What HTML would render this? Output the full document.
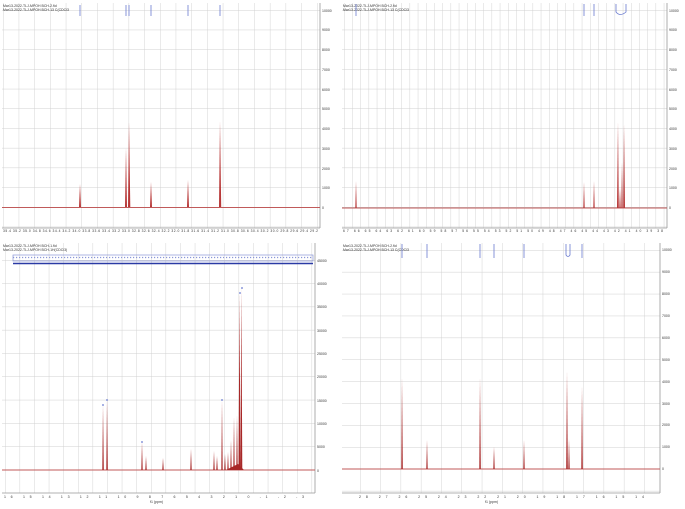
<!DOCTYPE html>
<html><head><meta charset="utf-8"><style>
html,body{margin:0;padding:0;background:#fff;}
svg{display:block;font-family:"Liberation Sans",sans-serif;}
</style></head><body>
<svg width="685" height="509" viewBox="0 0 685 509" xmlns="http://www.w3.org/2000/svg">
<defs>
<pattern id="gTL" x="3" y="10" width="15.7" height="19.7" patternUnits="userSpaceOnUse"><path d="M0 0V19.7M0 0H15.7" stroke="#d0d0d0" stroke-width="0.9" fill="none"/></pattern>
<pattern id="gTR" x="344" y="10" width="8.2" height="19.7" patternUnits="userSpaceOnUse"><path d="M0 0V19.7M0 0H8.2" stroke="#d0d0d0" stroke-width="0.9" fill="none"/></pattern>
<pattern id="gBL" x="5" y="260" width="14.6" height="23.3" patternUnits="userSpaceOnUse"><path d="M0 0V23.3M0 0H14.6" stroke="#d0d0d0" stroke-width="0.9" fill="none"/></pattern>
<pattern id="gBR" x="360" y="250" width="20.3" height="21.9" patternUnits="userSpaceOnUse"><path d="M0 0V21.9M0 0H20.3" stroke="#d0d0d0" stroke-width="0.9" fill="none"/></pattern>
</defs>
<rect width="685" height="509" fill="#fff"/>

<!-- TL -->
<rect x="2" y="3" width="318" height="225" fill="url(#gTL)"/>
<line x1="320" y1="3" x2="320" y2="228" stroke="#999" stroke-width="0.8"/>
<line x1="2" y1="228" x2="320" y2="228" stroke="#999" stroke-width="0.8"/>
<text x="3" y="7" font-size="3.5" fill="#333">Mar13-2022-TLJ-MPOH BCH-2.fid</text>
<text x="3" y="11" font-size="3.5" fill="#333">Mar13-2022-TLJ-MPOH BCH-13 C(CDCl3</text>
<g stroke="#6a7bd0" stroke-width="0.8"><line x1="80" y1="5" x2="80" y2="16"/><line x1="126" y1="5" x2="126" y2="16"/><line x1="129" y1="5" x2="129" y2="16"/><line x1="151" y1="5" x2="151" y2="16"/><line x1="188" y1="5" x2="188" y2="16"/><line x1="220" y1="5" x2="220" y2="16"/></g>
<g font-size="3.5" fill="#333"><text x="322" y="12">10000</text><text x="322" y="31">9000</text><text x="322" y="51">8000</text><text x="322" y="71">7000</text><text x="322" y="91">6000</text><text x="322" y="110">5000</text><text x="322" y="130">4000</text><text x="322" y="150">3000</text><text x="322" y="170">2000</text><text x="322" y="189">1000</text><text x="322" y="209">0</text></g>
<text x="3" y="232" font-size="3.3" fill="#333" textLength="315">35.4 35.2 35.0 34.8 34.6 34.4 34.2 34.0 33.8 33.6 33.4 33.2 33.0 32.8 32.6 32.4 32.2 32.0 31.8 31.6 31.4 31.2 31.0 30.8 30.6 30.4 30.2 30.0 29.8 29.6 29.4 29.2</text>
<path d="M2 207.5H320" stroke="#c05a5a" stroke-width="1"/>
<g fill="#b83838"><path d="M79 207L80 184L81 207Z"/><path d="M125 207L126 148L127 207Z"/><path d="M128 207L129 122L130.3 207Z"/><path d="M150 207L151 182L152 207Z"/><path d="M187 207L188 180L189 207Z"/><path d="M219 207L220 121L221.2 207Z"/></g>

<!-- TR -->
<rect x="342" y="3" width="325" height="225" fill="url(#gTR)"/>
<line x1="667" y1="3" x2="667" y2="228" stroke="#999" stroke-width="0.8"/>
<line x1="342" y1="228" x2="667" y2="228" stroke="#999" stroke-width="0.8"/>
<text x="343" y="7" font-size="3.5" fill="#333">Mar13-2022-TLJ-MPOH BCH-2.fid</text>
<text x="343" y="11" font-size="3.5" fill="#333">Mar13-2022-TLJ-MPOH BCH-13 C(CDCl3</text>
<g stroke="#6a7bd0" stroke-width="0.8"><line x1="356" y1="4" x2="356" y2="16"/><line x1="584" y1="4" x2="584" y2="16"/><line x1="594" y1="4" x2="594" y2="16"/><path d="M616 4V12Q620 17 626 12V4" fill="none"/></g>
<g font-size="3.5" fill="#333"><text x="669" y="12">10000</text><text x="669" y="31">9000</text><text x="669" y="51">8000</text><text x="669" y="71">7000</text><text x="669" y="91">6000</text><text x="669" y="110">5000</text><text x="669" y="130">4000</text><text x="669" y="150">3000</text><text x="669" y="170">2000</text><text x="669" y="189">1000</text><text x="669" y="209">0</text></g>
<text x="343" y="232" font-size="3.3" fill="#333" textLength="320">67 66 65 64 63 62 61 60 59 58 57 56 55 54 53 52 51 50 49 48 47 46 45 44 43 42 41 40 39 38</text>
<path d="M342 208H667" stroke="#c05a5a" stroke-width="1"/>
<g fill="#b83838"><path d="M355.3 208L356 181L356.7 208Z"/><path d="M583.3 208L584 182L584.7 208Z"/><path d="M593.3 208L594 181L594.7 208Z"/><path d="M617 208L618 122L618.8 208Z"/><path d="M619.3 208L620 188L620.7 208Z"/><path d="M621.3 208L622 162L622.7 208Z"/><path d="M623.2 208L624 124L625 208Z"/></g>

<!-- BL -->
<rect x="2" y="243" width="313" height="250" fill="url(#gBL)"/>
<line x1="315" y1="243" x2="315" y2="493" stroke="#999" stroke-width="0.8"/>
<line x1="2" y1="493" x2="315" y2="493" stroke="#999" stroke-width="0.8"/>
<text x="3" y="247" font-size="3.5" fill="#333">Mar13-2022-TLJ-MPOH BCH-1.fid</text>
<text x="3" y="251" font-size="3.5" fill="#333">Mar13-2022-TLJ-MPOH BCH-1H(CDCl3)</text>
<rect x="13" y="255" width="300" height="6" fill="none" stroke="#8a96d8" stroke-width="0.7"/>
<path d="M13 263.5H313" stroke="#2a3aa5" stroke-width="1.6"/>
<path d="M13 257.5H313" stroke="#8a96d8" stroke-width="1.2" stroke-dasharray="1.2 1.8"/>
<g font-size="3.5" fill="#333"><text x="317" y="262">45000</text><text x="317" y="285">40000</text><text x="317" y="308">35000</text><text x="317" y="332">30000</text><text x="317" y="355">25000</text><text x="317" y="378">20000</text><text x="317" y="402">15000</text><text x="317" y="425">10000</text><text x="317" y="448">5000</text><text x="317" y="472">0</text></g>
<text x="4" y="498" font-size="3.5" fill="#333" textLength="300">16 15 14 13 12 11 10 9 8 7 6 5 4 3 2 1 0 -1 -2 -3</text>
<text x="150" y="503" font-size="3.5" fill="#333">f1 (ppm)</text>
<path d="M2 470H315" stroke="#c05a5a" stroke-width="1"/>
<g fill="#a82828"><path d="M102.3 470L103 405L103.8 470Z"/><path d="M106.3 470L107 400L107.8 470Z"/><path d="M141.3 470L142 442L142.7 470Z"/><path d="M145.3 470L146 456L146.7 470Z"/><path d="M162.3 470L163 458L163.7 470Z"/><path d="M190.3 470L191 449L191.7 470Z"/><path d="M213.3 470L214 451L214.7 470Z"/><path d="M216.3 470L217 456L217.7 470Z"/><path d="M221.3 470L222 400L222.7 470Z"/><path d="M224.3 470L225 454L225.7 470Z"/><path d="M227.3 470L228 452L228.7 470Z"/><path d="M230.3 470L231 440L231.7 470Z"/><path d="M233.3 470L234 417L234.7 470Z"/><path d="M236.3 470L237 415L237.7 470Z"/><path d="M238.5 470L239.5 293L240.5 470Z"/><path d="M240.5 470L241.3 288L242.3 470Z"/><path d="M226 470L238 464L244 470Z"/></g>
<g fill="#6a7bd0"><circle cx="103" cy="405" r="0.9"/><circle cx="107" cy="400" r="0.9"/><circle cx="142" cy="442" r="0.9"/><circle cx="222" cy="400" r="0.9"/><circle cx="240" cy="293" r="0.9"/><circle cx="242" cy="288" r="0.9"/></g>

<!-- BR -->
<rect x="342" y="243" width="318" height="250" fill="url(#gBR)"/>
<line x1="660" y1="243" x2="660" y2="493" stroke="#999" stroke-width="0.8"/>
<line x1="342" y1="493" x2="660" y2="493" stroke="#999" stroke-width="0.8"/>
<text x="343" y="247" font-size="3.5" fill="#333">Mar13-2022-TLJ-MPOH BCH-2.fid</text>
<text x="343" y="251" font-size="3.5" fill="#333">Mar13-2022-TLJ-MPOH BCH-13 C(CDCl3</text>
<g stroke="#6a7bd0" stroke-width="0.8"><line x1="402" y1="244" x2="402" y2="258"/><line x1="427" y1="244" x2="427" y2="258"/><line x1="480" y1="244" x2="480" y2="258"/><line x1="494" y1="244" x2="494" y2="258"/><line x1="524" y1="244" x2="524" y2="258"/><path d="M566 244V255Q568 258 570 255V244" fill="none"/><line x1="582" y1="244" x2="582" y2="258"/></g>
<g font-size="3.5" fill="#333"><text x="662" y="251">10000</text><text x="662" y="273">9000</text><text x="662" y="295">8000</text><text x="662" y="317">7000</text><text x="662" y="339">6000</text><text x="662" y="361">5000</text><text x="662" y="383">4000</text><text x="662" y="405">3000</text><text x="662" y="426">2000</text><text x="662" y="448">1000</text><text x="662" y="470">0</text></g>
<text x="359" y="498" font-size="3.5" fill="#333" textLength="285">28 27 26 25 24 23 22 21 20 19 18 17 16 15 14</text>
<text x="485" y="503" font-size="3.5" fill="#333">f1 (ppm)</text>
<path d="M342 469H660" stroke="#c05a5a" stroke-width="1"/>
<g fill="#a82828"><path d="M401.3 469L402 377L402.8 469Z"/><path d="M426.3 469L427 440L427.7 469Z"/><path d="M479.3 469L480 377L480.8 469Z"/><path d="M493.3 469L494 447L494.7 469Z"/><path d="M523.3 469L524 440L524.7 469Z"/><path d="M566.2 469L567 371L567.8 469Z"/><path d="M568.3 469L569 439L569.7 469Z"/><path d="M581.3 469L582 386L582.8 469Z"/></g>
</svg>
</body></html>
